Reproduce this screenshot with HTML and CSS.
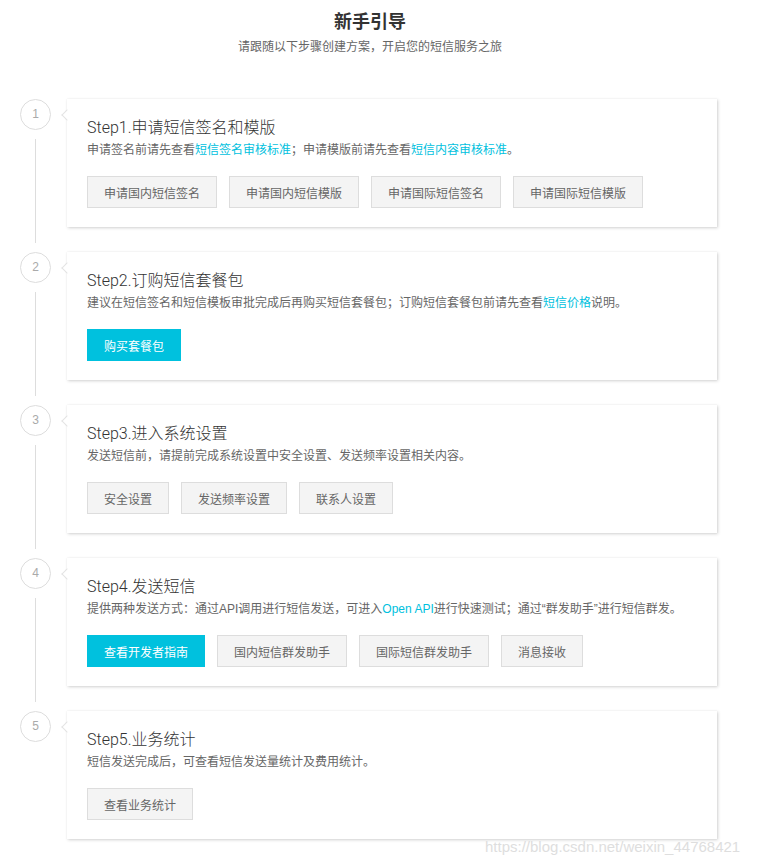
FILE: index.html
```html
<!DOCTYPE html>
<html lang="zh-CN">

<head>
    <meta charset="UTF-8">
    <meta name="viewport" content="width=device-width, initial-scale=1.0">
    <title>新手引导</title>
    <link rel="stylesheet" href="styles.css">
</head>

<body>
    <div class="guide_header">
        <h2>新手引导</h2>
        <p>请跟随以下步骤创建方案，开启您的短信服务之旅</p>
    </div>
    <div class="steps">
        <!-- step 1 -->
        <div class="step">
            <div class="step_axis">
                <span class="step_num">1</span>
                <span class="step_line"></span>
            </div>
            <div class="step_card">
                <h3>Step1.申请短信签名和模版</h3>
                <p class="step_desc">申请签名前请先查看<a href="#">短信签名审核标准</a>；申请模版前请先查看<a href="#">短信内容审核标准</a>。</p>
                <div class="step_btns">
                    <button class="btn">申请国内短信签名</button>
                    <button class="btn">申请国内短信模版</button>
                    <button class="btn">申请国际短信签名</button>
                    <button class="btn">申请国际短信模版</button>
                </div>
            </div>
        </div>
        <!-- step 2 -->
        <div class="step">
            <div class="step_axis">
                <span class="step_num">2</span>
                <span class="step_line"></span>
            </div>
            <div class="step_card">
                <h3>Step2.订购短信套餐包</h3>
                <p class="step_desc">建议在短信签名和短信模板审批完成后再购买短信套餐包；订购短信套餐包前请先查看<a href="#">短信价格</a>说明。</p>
                <div class="step_btns">
                    <button class="btn btn_primary">购买套餐包</button>
                </div>
            </div>
        </div>
        <!-- step 3 -->
        <div class="step">
            <div class="step_axis">
                <span class="step_num">3</span>
                <span class="step_line"></span>
            </div>
            <div class="step_card">
                <h3>Step3.进入系统设置</h3>
                <p class="step_desc">发送短信前，请提前完成系统设置中安全设置、发送频率设置相关内容。</p>
                <div class="step_btns">
                    <button class="btn">安全设置</button>
                    <button class="btn">发送频率设置</button>
                    <button class="btn">联系人设置</button>
                </div>
            </div>
        </div>
        <!-- step 4 -->
        <div class="step">
            <div class="step_axis">
                <span class="step_num">4</span>
                <span class="step_line"></span>
            </div>
            <div class="step_card">
                <h3>Step4.发送短信</h3>
                <p class="step_desc">提供两种发送方式：通过API调用进行短信发送，可进入<a href="#">Open API</a>进行快速测试；通过“群发助手”进行短信群发。</p>
                <div class="step_btns">
                    <button class="btn btn_primary">查看开发者指南</button>
                    <button class="btn">国内短信群发助手</button>
                    <button class="btn">国际短信群发助手</button>
                    <button class="btn">消息接收</button>
                </div>
            </div>
        </div>
        <!-- step 5 -->
        <div class="step">
            <div class="step_axis">
                <span class="step_num">5</span>
            </div>
            <div class="step_card">
                <h3>Step5.业务统计</h3>
                <p class="step_desc">短信发送完成后，可查看短信发送量统计及费用统计。</p>
                <div class="step_btns">
                    <button class="btn">查看业务统计</button>
                </div>
            </div>
        </div>
    </div>
    <div class="watermark">https://blog.csdn.net/weixin_44768421</div>
</body>

</html>
```

FILE: styles.css
```css
* {
    margin: 0;
    padding: 0;
    box-sizing: border-box;
}

html,
body {
    width: 100%;
    background-color: #fff;
    font-family: "Liberation Sans", "Noto Sans CJK SC", sans-serif;
    color: #333;
}

body {
    position: relative;
    min-height: 864px;
}

.guide_header {
    width: 740px;
    padding-top: 10px;
    text-align: center;
}

.guide_header h2 {
    font-size: 18px;
    line-height: 24px;
    font-weight: bold;
    color: #333;
}

.guide_header p {
    margin-top: 3px;
    font-size: 12px;
    line-height: 20px;
    color: #666;
}

.steps {
    padding: 42px 46px 0 20px;
}

.step {
    display: flex;
}

.step_axis {
    width: 31px;
    margin-right: 16px;
    display: flex;
    flex-direction: column;
    align-items: center;
}

.step_num {
    width: 31px;
    height: 31px;
    border: 1px solid #ddd;
    border-radius: 50%;
    font-size: 12px;
    line-height: 29px;
    text-align: center;
    color: #aaa;
}

.step_line {
    flex: 1;
    width: 1px;
    margin: 9px 0;
    background-color: #ddd;
}

.step_card {
    position: relative;
    flex: 1;
    height: 128px;
    margin-bottom: 25px;
    padding: 17px 20px 0;
    background-color: #fff;
    box-shadow: 1px 1px 3px rgba(0, 0, 0, 0.18), 0 0 1px rgba(0, 0, 0, 0.08);
}

.step_card::before {
    content: '';
    position: absolute;
    left: -4px;
    top: 12px;
    width: 7px;
    height: 7px;
    background-color: #fff;
    border-left: 1px solid #e3e3e3;
    border-bottom: 1px solid #e3e3e3;
    transform: rotate(45deg);
}

.step_card h3 {
    font-family: Roboto, "Noto Sans CJK SC", sans-serif;
    font-size: 16px;
    line-height: 24px;
    font-weight: 300;
    color: #333;
}

.step_desc {
    font-size: 12px;
    line-height: 20px;
    color: #666;
}

.step_desc a {
    color: #00c1de;
    text-decoration: none;
}

.step_btns {
    display: flex;
    margin-top: 16px;
}

.btn {
    height: 32px;
    padding: 0 16px;
    margin-right: 12px;
    border: 1px solid #ddd;
    background-color: #f4f4f4;
    font-family: "Liberation Sans", "Noto Sans CJK SC", sans-serif;
    font-size: 12px;
    color: #666;
    cursor: pointer;
}

.btn_primary {
    border-color: #00c1de;
    background-color: #00c1de;
    color: #fff;
}

.watermark {
    position: absolute;
    left: 485px;
    top: 837px;
    font-size: 15px;
    line-height: 20px;
    color: #dedede;
    white-space: nowrap;
}
```
